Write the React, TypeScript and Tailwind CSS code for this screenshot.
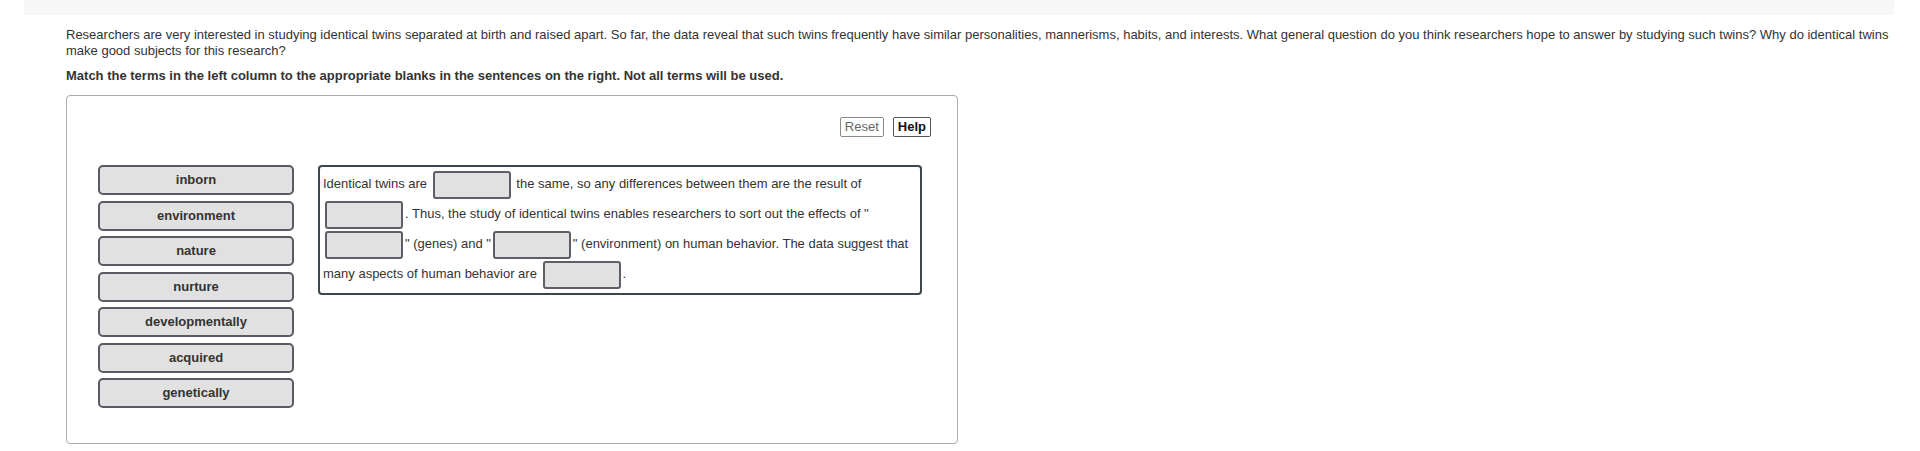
import React from 'react'

const terms = ['inborn', 'environment', 'nature', 'nurture', 'developmentally', 'acquired', 'genetically']

function Blank() {
    return (
        <span className="inline-block w-[78px] h-[28px] mx-[2px] align-middle border-2 border-[#5e5e66] rounded-[3px] bg-[#e1e1e1]"></span>
    )
}

export default function App() {
    return (
        <div className="min-h-[451px] bg-white font-['Liberation_Sans',Arial,sans-serif] text-[#333]">
            <div className="ml-[24px] w-[1870px] h-[15px] bg-[#f7f7f7]"></div>

            <div className="pl-[66px]">
                <p className="mt-[12px] w-[1850px] text-[13px] leading-[16px]">
                    Researchers are very interested in studying identical twins separated at birth and raised apart. So far, the data reveal that such twins frequently have similar personalities, mannerisms, habits, and interests. What general question do you think researchers hope to answer by studying such twins? Why do identical twins make good subjects for this research?
                </p>
                <p className="mt-[9px] text-[13px] leading-[16px] font-bold">
                    Match the terms in the left column to the appropriate blanks in the sentences on the right. Not all terms will be used.
                </p>

                <div className="mt-[11px] w-[892px] h-[349px] border border-[#ababab] rounded-[4px]">
                    <div className="flex justify-end gap-[9px] pt-[21px] pr-[26px]">
                        <button className="h-[20px] px-[4px] border border-[#8a8a8a] rounded-[2px] text-[13px] leading-[18px] text-[#666]">
                            Reset
                        </button>
                        <button className="h-[20px] px-[4px] border border-[#555] rounded-[2px] text-[13px] leading-[18px] font-bold text-[#111]">
                            Help
                        </button>
                    </div>

                    <div className="flex items-start gap-[24px] mt-[28px] pl-[31px]">
                        <div className="flex flex-col gap-[5.5px] w-[196px]">
                            {terms.map((t) => (
                                <div
                                    key={t}
                                    className="h-[30px] border-2 border-[#5a5a62] rounded-[5px] bg-[#e1e1e1] text-center text-[13px] leading-[26px] font-bold text-[#333]"
                                >
                                    {t}
                                </div>
                            ))}
                        </div>

                        <div className="w-[604px] h-[130px] border-2 border-[#3d464b] rounded-[4px] px-[3px] pt-[2px] text-[13px] leading-[30px] text-[#333]">
                            Identical twins are <Blank /> the same, so any differences between them are the result of <Blank />. Thus, the study of identical twins enables researchers to sort out the effects of "<Blank />" (genes) and "<Blank />" (environment) on human behavior. The data suggest that many aspects of human behavior are <Blank />.
                        </div>
                    </div>
                </div>
            </div>
        </div>
    )
}
